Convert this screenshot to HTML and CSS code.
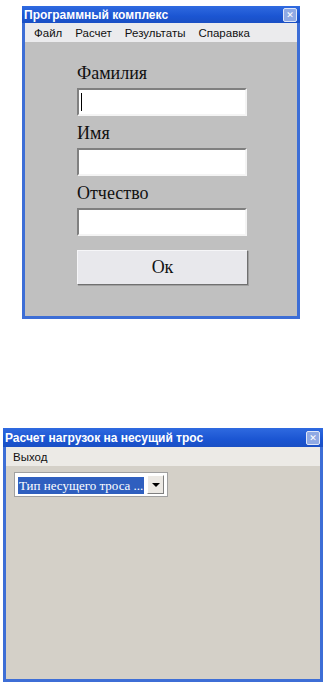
FILE: index.html
```html
<!DOCTYPE html>
<html lang="ru">
<head>
  <meta charset="UTF-8">
  <title>Программный комплекс</title>
  <link rel="stylesheet" href="styles.css">
</head>
<body>

<div class="window win-main">
  <div class="titlebar">
    <span class="title">Программный комплекс</span>
    <span class="close">&#x2715;</span>
  </div>
  <div class="menubar">
    <span>Файл</span>
    <span>Расчет</span>
    <span>Результаты</span>
    <span>Спаравка</span>
  </div>
  <form class="client grey">
    <label>Фамилия</label>
    <div class="field"><span class="caret"></span></div>
    <label>Имя</label>
    <div class="field"></div>
    <label>Отчество</label>
    <div class="field"></div>
    <div class="ok-button">Ок</div>
  </form>
</div>

<div class="window win-calc">
  <div class="titlebar">
    <span class="title">Расчет нагрузок на несущий трос</span>
    <span class="close">&#x2715;</span>
  </div>
  <div class="menubar">
    <span>Выход</span>
  </div>
  <div class="client beige">
    <div class="combo">
      <span class="combo-text"><span class="selected">Тип несущего троса ...</span></span>
      <span class="combo-btn"><span class="arrow"></span></span>
    </div>
  </div>
</div>

</body>
</html>
```

FILE: styles.css
```css
body { margin: 0; background: #fff; font-family: "Liberation Sans", "DejaVu Sans", sans-serif; }

.window {
  border: 3px solid #3d6ed6; border-top: none;
  display: flex; flex-direction: column;
}
.win-main { margin: 6px 0 0 22px; width: 272px; height: 310px; }
.win-calc { margin: 109px 0 0 3px; width: 314px; height: 251px; }

.titlebar {
  background: linear-gradient(#2f6ae0, #1b55d2 60%, #1a4fc4);
  color: #fff; font-weight: bold; font-size: 12px;
  height: 19px; display: flex; align-items: center; justify-content: space-between;
  padding: 0 3px 0 0; margin: 0 -3px;
}
.win-main .titlebar { height: 17px; }
.title { padding-left: 2px; }
.close {
  width: 12px; height: 12px; font-size: 9px; line-height: 12px; text-align: center;
  background: #8fa9e4; border: 1px solid #dfe6f7; border-radius: 2px; color: #fff;
}

.menubar {
  background: #ebebed; height: 19px; display: flex; align-items: center;
  font-size: 11.5px; color: #111; padding-left: 9px; gap: 13px;
}
.win-calc .menubar { background: #eceae6; padding-left: 7px; }

.client { flex: 1; }
.grey { background: #c0c0c0; padding: 21px 0 0 52px; }
.beige { background: #d4d0c8; padding: 7px 0 0 9px; }

.grey label, .ok-button, .selected {
  font-family: "Liberation Serif", "DejaVu Serif", "Times New Roman", serif;
}
.grey label {
  display: block; font-size: 18px; color: #111; height: 21px; line-height: 21px;
}
.field {
  width: 166px; height: 24px; background: #fff; margin: 4px 0 7px;
  border: 2px solid; border-color: #808080 #f4f4f4 #f4f4f4 #808080;
  position: relative;
}
.caret {
  position: absolute; left: 2px; top: 3px; width: 1px; height: 18px; background: #000;
}
.ok-button {
  width: 169px; height: 33px; background: #e8e8ec; margin-top: 14px;
  border: 1px solid; border-color: #f6f6f8 #707070 #707070 #f6f6f8;
  box-shadow: 1px 1px 0 #a0a0a0;
  font-size: 18px; color: #111;
  display: flex; align-items: center; justify-content: center;
}

.combo {
  width: 150px; height: 21px; background: #fff; display: flex; align-items: center;
  border: 1px solid #fff; outline: 1px solid #a0a0a0;
}
.combo-text { flex: 1; padding-left: 2px; }
.selected {
  background: #2f5fbf; color: #fff; font-size: 13px; padding: 1px 1px;
}
.combo-btn {
  width: 15px; height: 17px; background: #ece9e4; margin-right: 2px;
  border: 1px solid; border-color: #fff #808080 #808080 #fff;
  display: flex; align-items: center; justify-content: center;
}
.arrow {
  width: 0; height: 0; border-left: 4px solid transparent; border-right: 4px solid transparent;
  border-top: 4px solid #000;
}
```
